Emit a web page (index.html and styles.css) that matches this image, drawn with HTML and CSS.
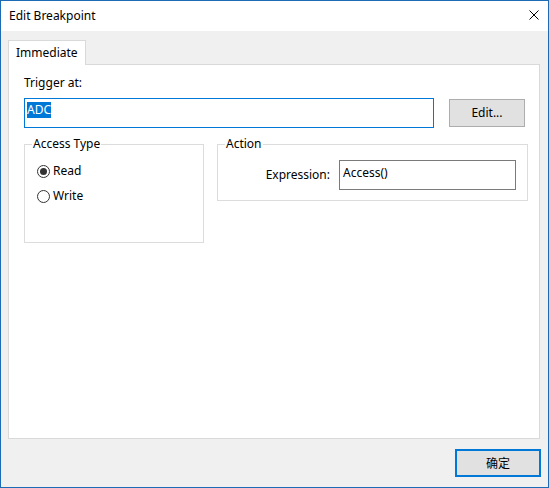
FILE: index.html
```html
<!DOCTYPE html>
<html>
<head>
<meta charset="utf-8">
<link rel="stylesheet" href="styles.css">
</head>
<body>
<div class="window">
  <div class="titlebar">
    <span class="title">Edit Breakpoint</span>
    <svg class="close" width="10" height="10" viewBox="0 0 10 10"><path d="M0.5 0.5 L9.5 9.5 M9.5 0.5 L0.5 9.5" stroke="#000" stroke-width="1"/></svg>
  </div>
  <div class="body">
    <div class="tabs"><div class="tab">Immediate</div></div>
    <div class="panel">
      <div class="label">Trigger at:</div>
      <div class="trigger-row">
        <div class="field focused"><span class="sel">ADC</span></div>
        <div class="btn">Edit...</div>
      </div>
      <div class="groups">
        <div class="group access">
          <span class="legend">Access Type</span>
          <div class="radio-row"><span class="radio checked"></span><span>Read</span></div>
          <div class="radio-row"><span class="radio"></span><span>Write</span></div>
        </div>
        <div class="group action">
          <span class="legend">Action</span>
          <div class="expr-row">
            <span class="expr-label">Expression:</span>
            <div class="field expr">Access()</div>
          </div>
        </div>
      </div>
    </div>
    <div class="footer">
      <div class="btn ok">确定</div>
    </div>
  </div>
</div>
</body>
</html>
```
FILE: styles.css
```css
* { box-sizing: border-box; }
html, body { margin: 0; padding: 0; }
body {
  font-family: "Noto Sans", "Noto Sans CJK SC", sans-serif;
  font-size: 12px;
  line-height: 16px;
  color: #000;
}
.window {
  width: 549px;
  height: 488px;
  border: 1px solid #1e6bb5;
  background: #f0f0f0;
  display: flex;
  flex-direction: column;
}
.titlebar {
  height: 30px;
  background: #fff;
  display: flex;
  align-items: center;
  justify-content: space-between;
  padding: 0 9px 0 8px;
}
.title { padding-bottom: 1px; }
.close { display: block; margin-bottom: 2px; }
.body {
  padding: 9px 8px 0 7px;
  display: flex;
  flex-direction: column;
}
.tabs { display: flex; }
.tab {
  position: relative;
  width: 78px;
  height: 25px;
  margin-bottom: -1px;
  background: #fff;
  border: 1px solid #d9d9d9;
  border-bottom: none;
  padding: 4px 0 0 7px;
  z-index: 1;
}
.panel {
  height: 375px;
  background: #fff;
  border: 1px solid #d9d9d9;
  padding: 10px 0 0 15px;
}
.label { height: 16px; }
.trigger-row {
  display: flex;
  align-items: flex-start;
  margin-top: 7px;
}
.field {
  background: #fff;
  border: 1px solid #7a7a7a;
  height: 30px;
  padding: 3px 0 0 2px;
}
.field.focused {
  border-color: #0078d7;
  width: 410px;
}
.sel {
  background: #0078d7;
  color: #fff;
  display: inline-block;
}
.btn {
  background: #e1e1e1;
  border: 1px solid #adadad;
  display: flex;
  align-items: center;
  justify-content: center;
}
.trigger-row .btn {
  width: 76px;
  height: 28px;
  margin: 1px 0 0 15px;
}
.groups {
  display: flex;
  align-items: flex-start;
  margin-top: 16px;
  gap: 13px;
}
.group {
  position: relative;
  border: 1px solid #dcdcdc;
}
.legend {
  position: absolute;
  top: -9px;
  left: 7px;
  padding: 0 1px;
  background: #fff;
}
.access {
  width: 180px;
  height: 99px;
  padding: 18px 0 0 12px;
  display: flex;
  flex-direction: column;
  gap: 9px;
}
.radio-row {
  display: flex;
  align-items: center;
  height: 16px;
}
.radio {
  width: 13px;
  height: 13px;
  border: 1px solid #333;
  border-radius: 50%;
  margin-right: 3px;
  display: flex;
  align-items: center;
  justify-content: center;
}
.radio.checked::after {
  content: "";
  width: 7px;
  height: 7px;
  border-radius: 50%;
  background: #333;
}
.action {
  width: 311px;
  height: 57px;
  padding: 15px 11px 0 0;
}
.expr-row {
  display: flex;
  align-items: center;
  justify-content: flex-end;
}
.expr-label { margin-right: 9px; }
.field.expr {
  width: 177px;
  padding: 4px 0 0 3px;
}
.footer {
  display: flex;
  justify-content: flex-end;
  padding-top: 10px;
  margin-right: -1px;
}
.btn.ok {
  width: 86px;
  height: 28px;
  border: 2px solid #0078d7;
  font-family: "Noto Sans CJK SC", sans-serif;
}
```
